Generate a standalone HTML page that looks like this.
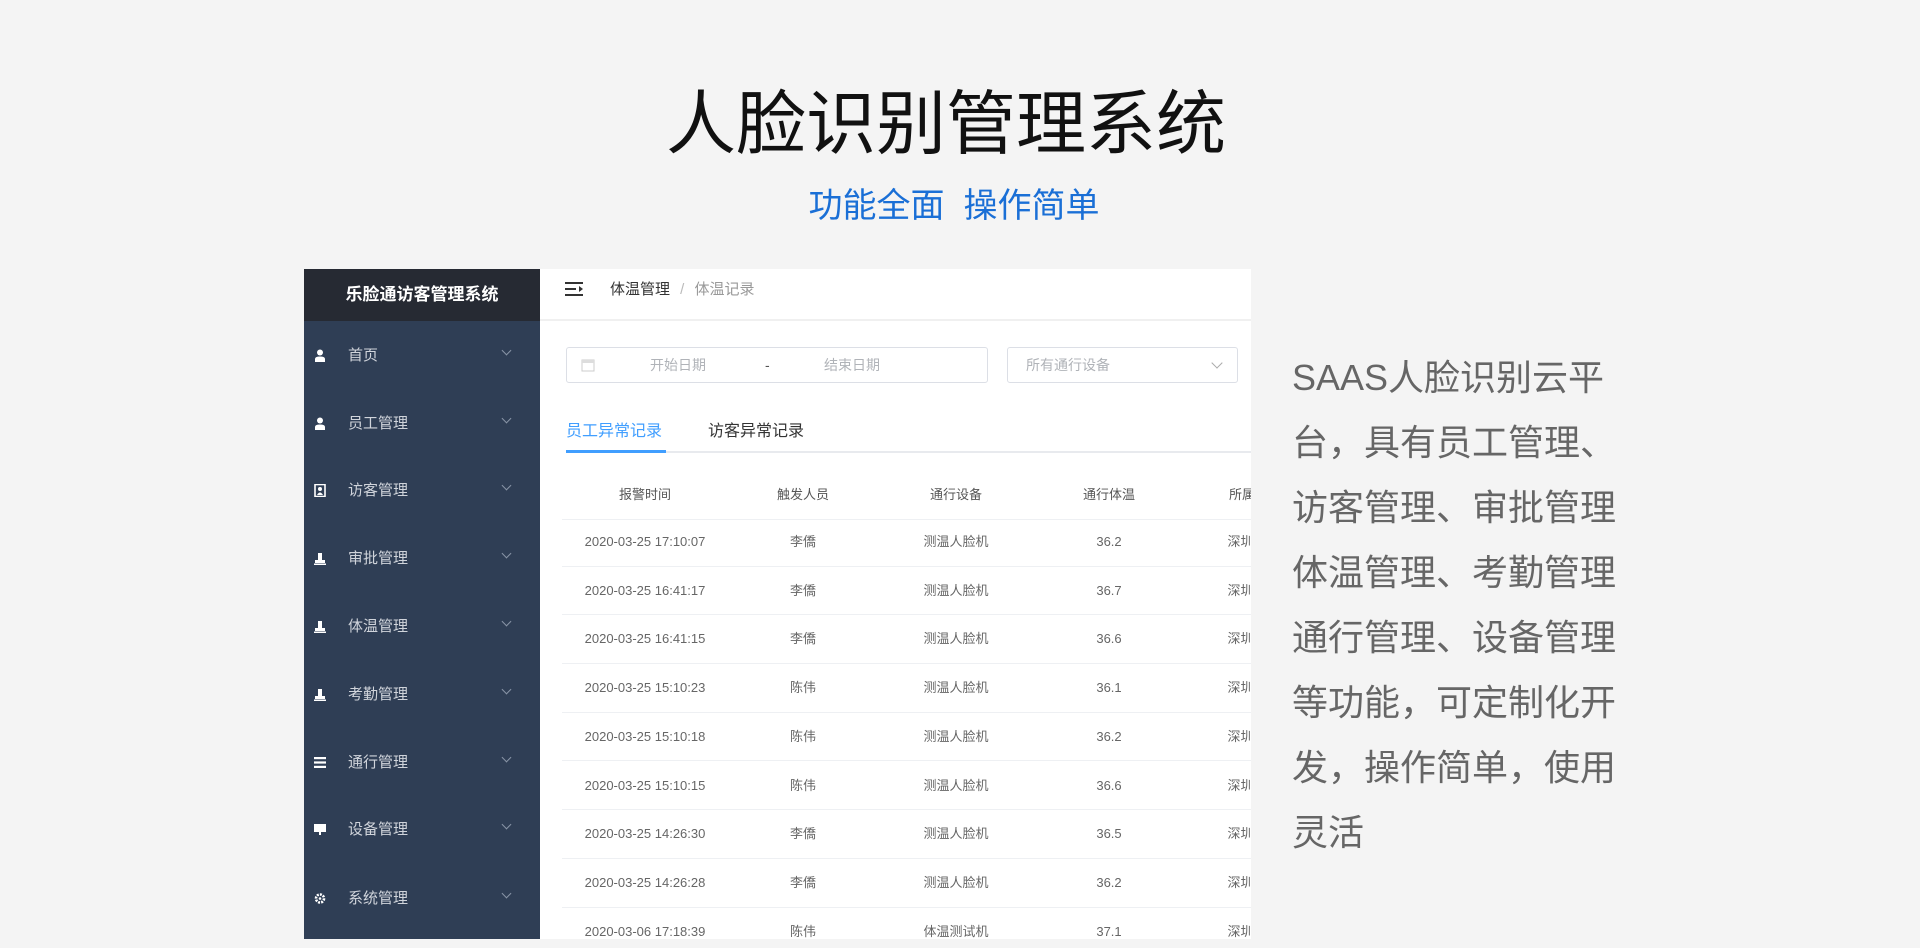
<!DOCTYPE html>
<html><head><meta charset="utf-8"><style>
*{margin:0;padding:0;box-sizing:border-box}
body{width:1920px;height:948px;background:#f4f4f4;position:relative;overflow:hidden;font-family:"Liberation Sans","Noto Sans CJK SC",sans-serif}
.abs{position:absolute}
.title{left:0;width:1892px;text-align:center;top:86px;font-size:70px;line-height:76px;color:#111}
.sub{left:0;width:1908px;text-align:center;top:186px;font-size:34px;line-height:40px;color:#1a6fd6}
.panel{left:304px;top:269px;width:947px;height:670px;background:#fff;overflow:hidden}
.side{left:0;top:0;width:236px;height:670px;background:#2f3e55}
.shead{left:0;top:0;width:236px;height:52px;background:#262a33;color:#fff;font-weight:bold;font-size:17px;line-height:52px;text-align:center}
.mi{left:0;width:236px;height:30px;line-height:30px;color:#d0d4db;font-size:15px}
.mi .ic{position:absolute;left:10px;top:8px;width:12px;height:13px}
.mi .tx{position:absolute;left:44px}
.mi .ch{position:absolute;left:199px;top:6px;width:7px;height:7px;border-right:1px solid #8894a6;border-bottom:1px solid #8894a6;transform:rotate(45deg)}
.top{left:236px;top:0;width:711px;height:52px;border-bottom:2px solid #f0f0f0;font-size:15px;line-height:52px}
.inp{border:1px solid #dcdfe6;border-radius:3px;height:36px;top:78px;font-size:14px;color:#b0b3b8;line-height:34px}
.tabs{top:148px;left:262px;font-size:16px;line-height:30px}
.row{left:258px;width:700px;height:48.7px;border-bottom:1px solid #eef0f3;font-size:13px;color:#666}
.row span{position:absolute;top:0;line-height:48px;transform:translateX(-50%);white-space:nowrap}
.desc{left:1292px;top:345px;font-size:36px;line-height:65px;color:#666;width:360px}
</style></head><body>
<div class="abs title">人脸识别管理系统</div>
<div class="abs sub">功能全面&nbsp;&nbsp;操作简单</div>

<div class="abs panel">
 <div class="abs side">
  <div class="abs shead">乐脸通访客管理系统</div>
  <div class="abs mi" style="top:72px"><svg class="ic" viewBox="0 0 12 13"><circle cx="6" cy="3.5" r="3" fill="#fff"/><path d="M1 13V10Q1 7.5 6 7.5T11 10V13Z" fill="#fff"/></svg><span class="tx">首页</span><i class="ch"></i></div>
  <div class="abs mi" style="top:140px"><svg class="ic" viewBox="0 0 12 13"><circle cx="6" cy="3.5" r="3" fill="#fff"/><path d="M1 13V10Q1 7.5 6 7.5T11 10V13Z" fill="#fff"/></svg><span class="tx">员工管理</span><i class="ch"></i></div>
  <div class="abs mi" style="top:207px"><svg class="ic" viewBox="0 0 12 13"><rect x="1" y="0.5" width="10" height="12" fill="none" stroke="#fff" stroke-width="1.6"/><circle cx="6" cy="5" r="2" fill="#fff"/><path d="M3 11Q6 6 9 11Z" fill="#fff"/></svg><span class="tx">访客管理</span><i class="ch"></i></div>
  <div class="abs mi" style="top:275px"><svg class="ic" viewBox="0 0 12 13"><rect x="4" y="1" width="4" height="7" fill="#fff"/><rect x="1" y="8" width="10" height="3" fill="#fff"/><rect x="0" y="11.5" width="12" height="1.5" fill="#fff"/></svg><span class="tx">审批管理</span><i class="ch"></i></div>
  <div class="abs mi" style="top:343px"><svg class="ic" viewBox="0 0 12 13"><rect x="4" y="1" width="4" height="7" fill="#fff"/><rect x="1" y="8" width="10" height="3" fill="#fff"/><rect x="0" y="11.5" width="12" height="1.5" fill="#fff"/></svg><span class="tx">体温管理</span><i class="ch"></i></div>
  <div class="abs mi" style="top:411px"><svg class="ic" viewBox="0 0 12 13"><rect x="4" y="1" width="4" height="7" fill="#fff"/><rect x="1" y="8" width="10" height="3" fill="#fff"/><rect x="0" y="11.5" width="12" height="1.5" fill="#fff"/></svg><span class="tx">考勤管理</span><i class="ch"></i></div>
  <div class="abs mi" style="top:479px"><svg class="ic" viewBox="0 0 12 13"><rect x="0" y="1" width="12" height="2.2" fill="#fff"/><rect x="0" y="5.4" width="12" height="2.2" fill="#fff"/><rect x="0" y="9.8" width="12" height="2.2" fill="#fff"/></svg><span class="tx">通行管理</span><i class="ch"></i></div>
  <div class="abs mi" style="top:546px"><svg class="ic" viewBox="0 0 12 13"><rect x="0" y="1" width="12" height="8" fill="#fff"/><rect x="5" y="9" width="2" height="3" fill="#fff"/></svg><span class="tx">设备管理</span><i class="ch"></i></div>
  <div class="abs mi" style="top:615px"><svg class="ic" viewBox="0 0 12 13"><circle cx="6" cy="6.5" r="4" fill="none" stroke="#fff" stroke-width="2.6" stroke-dasharray="2 1.1"/><circle cx="6" cy="6.5" r="1.3" fill="#fff"/></svg><span class="tx">系统管理</span><i class="ch"></i></div>
 </div>
 <div class="abs top">
  <svg class="abs" style="left:25px;top:13px" width="18" height="14" viewBox="0 0 18 14"><rect x="0" y="0" width="18" height="2" fill="#333"/><rect x="0" y="6" width="11" height="2" fill="#333"/><rect x="0" y="12" width="18" height="2" fill="#333"/><path d="M14 4L18 7L14 10Z" fill="#333"/></svg>
  <span class="abs" style="left:70px;top:0;line-height:42px;color:#333">体温管理 <span style="color:#bbb;margin:0 6px">/</span> <span style="color:#999">体温记录</span></span>
 </div>
 <div class="abs inp" style="left:262px;width:422px">
  <svg class="abs" style="left:14px;top:10px" width="14" height="14" viewBox="0 0 14 14"><rect x="1" y="2" width="12" height="11" fill="none" stroke="#ccc"/><rect x="1" y="2" width="12" height="3" fill="#ddd"/></svg>
  <span class="abs" style="left:83px">开始日期</span><span class="abs" style="left:198px;color:#555">-</span><span class="abs" style="left:257px">结束日期</span>
 </div>
 <div class="abs inp" style="left:703px;width:231px"><span class="abs" style="left:18px">所有通行设备</span><i class="abs" style="left:205px;top:11px;width:8px;height:8px;border-right:1px solid #aaa;border-bottom:1px solid #aaa;transform:rotate(45deg)"></i></div>
 <div class="abs tabs"><span style="color:#409eff">员工异常记录</span><span style="color:#333;margin-left:46px">访客异常记录</span></div>
 <div class="abs" style="left:262px;top:182px;width:700px;height:2px;background:#e8eaee"></div>
 <div class="abs" style="left:262px;top:181px;width:100px;height:3px;background:#409eff"></div>
 <div class="abs row" style="top:202px;color:#555"><span style="left:83px">报警时间</span><span style="left:241px">触发人员</span><span style="left:394px">通行设备</span><span style="left:547px">通行体温</span><span style="left:680px">所属</span></div>
 <div class="abs row" style="top:249px"><span style="left:83px">2020-03-25 17:10:07</span><span style="left:241px">李僑</span><span style="left:394px">测温人脸机</span><span style="left:547px">36.2</span><span style="left:685px">深圳镀</span></div>
 <div class="abs row" style="top:297.7px"><span style="left:83px">2020-03-25 16:41:17</span><span style="left:241px">李僑</span><span style="left:394px">测温人脸机</span><span style="left:547px">36.7</span><span style="left:685px">深圳镀</span></div>
 <div class="abs row" style="top:346.4px"><span style="left:83px">2020-03-25 16:41:15</span><span style="left:241px">李僑</span><span style="left:394px">测温人脸机</span><span style="left:547px">36.6</span><span style="left:685px">深圳镀</span></div>
 <div class="abs row" style="top:395.1px"><span style="left:83px">2020-03-25 15:10:23</span><span style="left:241px">陈伟</span><span style="left:394px">测温人脸机</span><span style="left:547px">36.1</span><span style="left:685px">深圳镀</span></div>
 <div class="abs row" style="top:443.8px"><span style="left:83px">2020-03-25 15:10:18</span><span style="left:241px">陈伟</span><span style="left:394px">测温人脸机</span><span style="left:547px">36.2</span><span style="left:685px">深圳镀</span></div>
 <div class="abs row" style="top:492.5px"><span style="left:83px">2020-03-25 15:10:15</span><span style="left:241px">陈伟</span><span style="left:394px">测温人脸机</span><span style="left:547px">36.6</span><span style="left:685px">深圳镀</span></div>
 <div class="abs row" style="top:541.2px"><span style="left:83px">2020-03-25 14:26:30</span><span style="left:241px">李僑</span><span style="left:394px">测温人脸机</span><span style="left:547px">36.5</span><span style="left:685px">深圳镀</span></div>
 <div class="abs row" style="top:589.9px"><span style="left:83px">2020-03-25 14:26:28</span><span style="left:241px">李僑</span><span style="left:394px">测温人脸机</span><span style="left:547px">36.2</span><span style="left:685px">深圳镀</span></div>
 <div class="abs row" style="top:638.6px"><span style="left:83px">2020-03-06 17:18:39</span><span style="left:241px">陈伟</span><span style="left:394px">体温测试机</span><span style="left:547px">37.1</span><span style="left:685px">深圳镀</span></div>
</div>

<div class="abs desc">SAAS人脸识别云平<br>台，具有员工管理、<br>访客管理、审批管理<br>体温管理、考勤管理<br>通行管理、设备管理<br>等功能，可定制化开<br>发，操作简单，使用<br>灵活</div>
</body></html>
